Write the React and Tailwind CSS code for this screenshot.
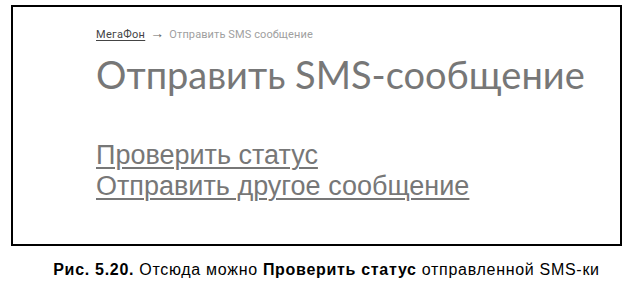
export default function App() {
  return (
    <div className="w-[629px] h-[290px] bg-white relative overflow-hidden">
      <div className="ml-[11px] mt-[5px] w-[611px] h-[241px] border-2 border-black pl-[83px] pt-[20px]">
        <div className="flex items-center gap-[5px] h-[16px] text-[11px] tracking-[0.1px] text-[#a0a0a0] font-['Roboto',sans-serif]">
          <span className="text-[#444] underline underline-offset-[2px] tracking-[0.3px]">МегаФон</span>
          <span className="text-[#666] text-[14px] leading-none -translate-y-[2px]">→</span>
          <span>Отправить SMS сообщение</span>
        </div>
        <h1 className="mt-[7px] whitespace-nowrap text-[38px] leading-[48px] text-[#777] font-['Lato',sans-serif]">
          Отправить SMS-сообщение
        </h1>
        <div className="mt-[42px] flex flex-col text-[27px] leading-[31px] text-[#777] font-['Liberation_Sans',sans-serif]">
          <a className="underline decoration-[2px] underline-offset-[3px] w-fit">Проверить статус</a>
          <a className="underline decoration-[2px] underline-offset-[3px] w-fit">Отправить другое сообщение</a>
        </div>
      </div>
      <p className="mt-[12px] pl-[24px] text-center text-[16px] text-black font-['Liberation_Sans',sans-serif] tracking-[0.7px]">
        <b>Рис. 5.20.</b> Отсюда можно <b>Проверить статус</b> отправленной SMS-ки
      </p>
    </div>
  );
}
